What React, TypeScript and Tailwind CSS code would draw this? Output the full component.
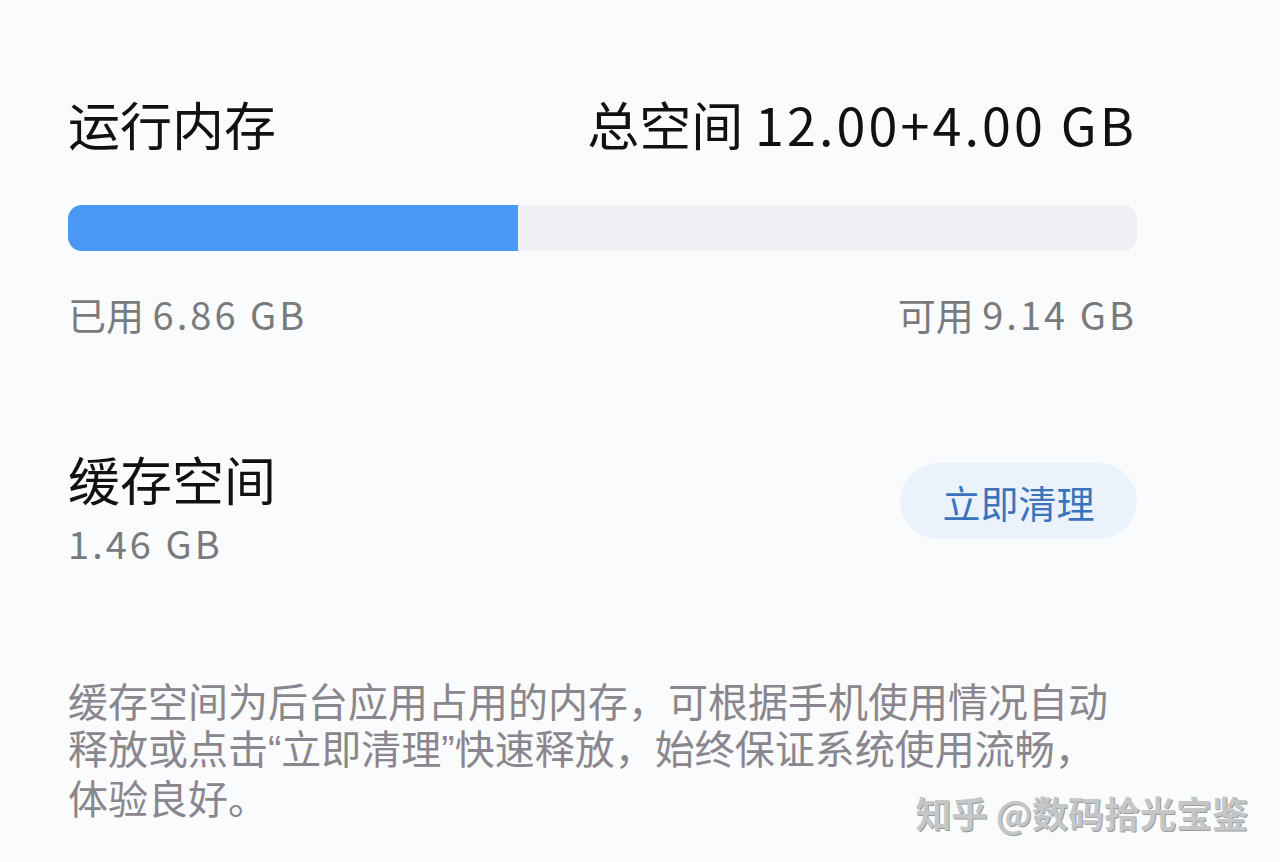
const font = { fontFamily: '"Noto Sans CJK SC", "Noto Sans", sans-serif' }

function Q({ children }: { children: string }) {
  return <span className="font-['Liberation_Sans',sans-serif]">{children}</span>
}

export default function App() {
  const usedPct = 42.1
  return (
    <div className="relative h-[862px] w-[1280px] overflow-hidden bg-[#f9fbfc]" style={font}>
      <div className="pl-[68px] pr-[143px] pt-[98px]">
        <div className="flex items-center justify-between text-[52px] leading-[52px] text-[#111]">
          <span>运行内存</span>
          <span>
            总空间 <span className="tracking-[0.06em]">12.00+4.00 GB</span>
          </span>
        </div>

        <div className="mt-[55px] h-[46px] w-full overflow-hidden rounded-[14px] bg-[#eef0f3]">
          <div className="h-full bg-[#4b98f6]" style={{ width: `${usedPct}%` }} />
        </div>

        <div className="mt-[43px] flex items-center justify-between text-[38px] leading-[40px] text-[#7a7a7c]">
          <span>
            已用 <span className="tracking-[0.08em]">6.86 GB</span>
          </span>
          <span>
            可用 <span className="tracking-[0.08em]">9.14 GB</span>
          </span>
        </div>

        <div className="mt-[119px] flex items-center justify-between">
          <div className="flex flex-col">
            <span className="text-[52px] leading-[52px] text-[#111]">缓存空间</span>
            <span className="mt-[18px] text-[38px] leading-[40px] tracking-[0.08em] text-[#7a7a7c]">1.46 GB</span>
          </div>
          <button className="-mt-[14px] h-[76px] w-[237px] rounded-full bg-[#eaf2fb] text-[38px] text-[#3d72bd]">
            立即清理
          </button>
        </div>

        <p className="mt-[114px] w-[1100px] text-[40px] leading-[47px] text-[#8b868d]">
          缓存空间为后台应用占用的内存，可根据手机使用情况自动
          <br />
          释放或点击<Q>“</Q>立即清理<Q>”</Q>快速释放，始终保证系统使用流畅，
          <br />
          体验良好。
        </p>
      </div>

      <div className="absolute bottom-[30px] right-[32px] text-[36px] font-bold leading-[40px] text-[#c4c6c8] [text-shadow:1px_1px_0_#9a9c9e]">
        知乎 @数码拾光宝鉴
      </div>
    </div>
  )
}
